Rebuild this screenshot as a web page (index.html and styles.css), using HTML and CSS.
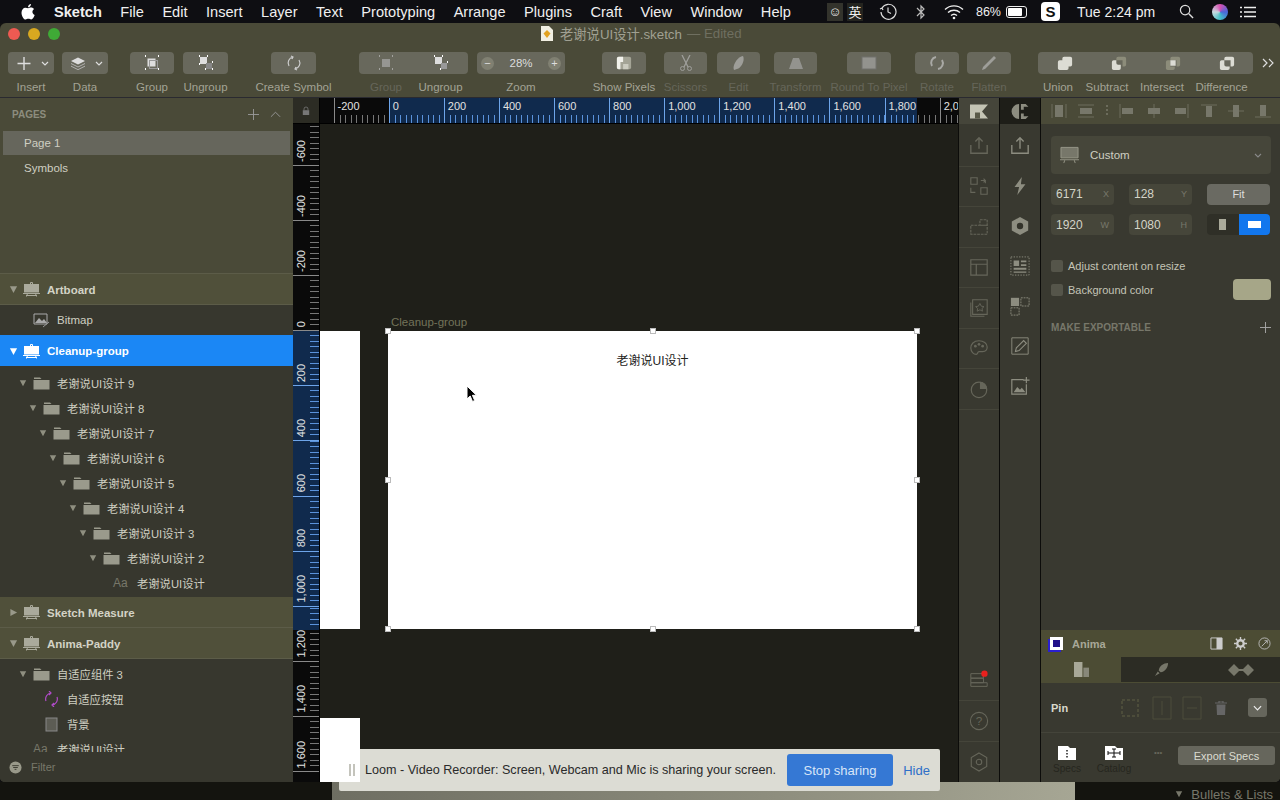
FILE: index.html
```html
<!DOCTYPE html>
<html lang="en">
<head>
    <meta charset="UTF-8">
    <title>老谢说UI设计.sketch</title>
    <link rel="stylesheet" href="styles.css">
</head>
<body>
    <svg class="defs" xmlns="http://www.w3.org/2000/svg">
        <symbol id="tri" viewBox="0 0 10 10"><path d="M1 1.500h8L5 9z" fill="currentColor"/></symbol>
        <symbol id="tri-r" viewBox="0 0 10 10"><path d="M1.500 1v8L9 5z" fill="currentColor"/></symbol>
        <symbol id="board" viewBox="0 0 17 15"><path d="M1 2h15v8.500H1z" fill="currentColor"/><path d="M7.500 2V0.500h2V2M0 11.500h17M3.500 14.500l1-3M13.500 14.500l-1-3M3 13.500h11" fill="none" stroke="currentColor"/></symbol>
        <symbol id="folder" viewBox="0 0 17 14"><path d="M1 1.500h6l1.500 1.500H1z" fill="currentColor"/><path d="M0.500 4h16v9.500H0.500z" fill="currentColor"/></symbol>
        <symbol id="up" viewBox="0 0 22 22"><path d="M2 10v9h18v-9M11 2v12M7 6l4-4 4 4" fill="none" stroke="currentColor" stroke-width="1.500"/></symbol>
    </svg>

    <header class="menubar">
        <svg class="apple" viewBox="0 0 14 16"><path d="M10 0c0 2-1.500 3.500-3 3.300C7 1.500 8.500.200 10 0zM7.100 4.200c.8 0 1.700-.7 3-.7 1.200 0 2.300.6 3 1.600-2.500 1.500-2 5 .6 6-.7 1.800-2 4.400-3.500 4.400-1.100 0-1.500-.7-2.800-.7s-1.800.7-2.800.7C2.600 15.500.5 11.800.5 8.700c0-3 1.900-5 3.800-5 1.200 0 2.100.5 2.800.5z" fill="#fff"/></svg>
        <nav class="menus">
            <b>Sketch</b><span>File</span><span>Edit</span><span>Insert</span><span>Layer</span><span>Text</span><span>Prototyping</span><span>Arrange</span><span>Plugins</span><span>Craft</span><span>View</span><span>Window</span><span>Help</span>
        </nav>
        <div class="status">
            <span class="chip">☺</span><span class="chip cjk">英</span>
            <svg class="st-clock" viewBox="0 0 18 18"><path d="M3 5a7.500 7.500 0 1 1-1 4M1 6l2-1 1 2M9 4.500V9l3 1.500" fill="none" stroke="#ddd" stroke-width="1.200"/></svg>
            <svg class="st-bt" viewBox="0 0 12 16"><path d="M2 4l7 7-3 3V2l3 3-7 7" fill="none" stroke="#bbb" stroke-width="1.200"/></svg>
            <svg class="st-wifi" viewBox="0 0 20 16"><path d="M1 5.500a13 13 0 0 1 18 0M4 8.500a9 9 0 0 1 12 0M7 11.500a4.500 4.500 0 0 1 6 0" fill="none" stroke="#eee" stroke-width="1.400"/><circle cx="10" cy="14" r="1.300" fill="#eee"/></svg>
            <span class="pct">86%</span>
            <span class="battery"><i></i></span>
            <span class="s-app">S</span>
            <span class="clock">Tue 2:24 pm</span>
            <svg class="st-search" viewBox="0 0 16 16"><circle cx="6.500" cy="6.500" r="5" fill="none" stroke="#ddd" stroke-width="1.300"/><path d="M10.500 10.500L15 15" stroke="#ddd" stroke-width="1.500"/></svg>
            <span class="siri"></span>
            <svg class="st-list" viewBox="0 0 16 12"><path d="M4 1.500h12M4 6h12M4 10.500h12M0 1.500h2M0 6h2M0 10.500h2" stroke="#eee" stroke-width="1.500"/></svg>
        </div>
    </header>

    <div class="window">
        <div class="titlebar">
            <span class="light red"></span><span class="light yellow"></span><span class="light green"></span>
            <div class="doc-title">
                <svg viewBox="0 0 12 15"><path d="M0 0h8l4 4v11H0z" fill="#f1efe2"/><path d="M6 4l3.500 3.500L6 12 2.500 7.500z" fill="#e2a21f"/></svg>
                <span>老谢说UI设计.sketch</span><em>— Edited</em>
            </div>
        </div>

        <div class="toolbar">
            <div class="tool w46"><div class="btn split"><svg viewBox="0 0 12 12"><path d="M6 0v12M0 6h12" stroke="#ddd" stroke-width="1.300"/></svg><svg class="chev" viewBox="0 0 8 5"><path d="M1 1l3 3 3-3" fill="none" stroke="#ddd" stroke-width="1.200"/></svg></div><label>Insert</label></div>
            <div class="tool w46 ml8"><div class="btn split"><svg viewBox="0 0 16 14"><path d="M8 0l8 4-8 4-8-4z" fill="#ddd"/><path d="M0 7l8 4 8-4M0 10l8 4 8-4" fill="none" stroke="#bbb"/></svg><svg class="chev" viewBox="0 0 8 5"><path d="M1 1l3 3 3-3" fill="none" stroke="#ddd" stroke-width="1.200"/></svg></div><label>Data</label></div>
            <div class="tool w44 ml22"><div class="btn"><svg viewBox="0 0 16 16"><path d="M1 1h1M14 1h1M1 14h1M14 14h1" stroke="#fff" stroke-width="2"/><rect x="3.500" y="3.500" width="8" height="8" fill="#ddd"/><rect x="5.500" y="5.500" width="8" height="8" fill="none" stroke="#999"/></svg></div><label>Group</label></div>
            <div class="tool w45 ml9"><div class="btn"><svg viewBox="0 0 16 16"><rect x="2" y="2" width="7" height="7" fill="#ddd"/><rect x="8" y="8" width="6" height="6" fill="#888"/><path d="M1 1h1M9 1h1M1 9h1M14 7h1M7 14h1M14 14h1" stroke="#fff" stroke-width="2"/></svg></div><label>Ungroup</label></div>
            <div class="tool w45 ml43"><div class="btn"><svg viewBox="0 0 16 16"><path d="M3 11a6 6 0 0 1 4-9M13 5a6 6 0 0 1-4 9M5 1l2 1-1 2M11 15l-2-1 1-2" fill="none" stroke="#ccc" stroke-width="1.200"/></svg></div><label>Create Symbol</label></div>

            <div class="combo ml43">
                <div class="tool w54"><div class="btn flat dim"><svg viewBox="0 0 16 16"><path d="M1 1h1M14 1h1M1 14h1M14 14h1" stroke="#bbb" stroke-width="2"/><rect x="4" y="4" width="8" height="8" fill="#aaa"/></svg></div><label class="off">Group</label></div>
                <div class="tool w55"><div class="btn flat"><svg viewBox="0 0 16 16"><rect x="2" y="2" width="7" height="7" fill="#ddd"/><rect x="8" y="8" width="6" height="6" fill="#999"/><path d="M1 1h1M9 1h1M14 7h1M7 14h1" stroke="#fff" stroke-width="2"/></svg></div><label>Ungroup</label></div>
            </div>
            <div class="tool w88 ml9"><div class="btn zoom"><span class="round">−</span><span>28%</span><span class="round">+</span></div><label>Zoom</label></div>

            <div class="tool w44 ml37"><div class="btn"><svg viewBox="0 0 18 16"><rect x="1" y="1" width="16" height="14" rx="2" fill="#a4a496"/><path d="M1 3a2 2 0 0 1 2-2h5v6H5v8H3a2 2 0 0 1-2-2z" fill="#f2f2ec"/><path d="M8 9h6v6H8z" fill="#ccccc0"/></svg></div><label>Show Pixels</label></div>
            <div class="tool w43 ml18 off-tool"><div class="btn"><svg viewBox="0 0 14 16"><path d="M3 0l6 12M11 0L5 12" stroke="#bbb" stroke-width="1.300"/><circle cx="3.500" cy="13.500" r="2" fill="none" stroke="#bbb"/><circle cx="10.500" cy="13.500" r="2" fill="none" stroke="#bbb"/></svg></div><label>Scissors</label></div>
            <div class="tool w43 ml10 off-tool"><div class="btn"><svg viewBox="0 0 14 16"><path d="M11 1c2 4-1 11-6 13l-3 1c-2-4 3-13 9-14z" fill="#bbb"/></svg></div><label>Edit</label></div>
            <div class="tool w43 ml14 off-tool"><div class="btn"><svg viewBox="0 0 16 14"><path d="M5 2h6l4 11H1z" fill="#aaa"/></svg></div><label>Transform</label></div>
            <div class="tool w44 ml30 off-tool"><div class="btn"><svg viewBox="0 0 16 14"><rect x="1" y="1" width="14" height="12" fill="#aaa" stroke="#777"/></svg></div><label>Round To Pixel</label></div>
            <div class="tool w44 ml24 off-tool"><div class="btn"><svg viewBox="0 0 16 16"><path d="M3 11a6 6 0 0 1 4-9M13 5a6 6 0 0 1-4 9" fill="none" stroke="#ccc" stroke-width="2"/></svg></div><label>Rotate</label></div>
            <div class="tool w44 ml8 off-tool"><div class="btn"><svg viewBox="0 0 16 16"><path d="M13 1l2 2L4 14l-3 1 1-3z" fill="#bbb"/></svg></div><label>Flatten</label></div>

            <div class="combo ml27">
                <div class="tool w54"><div class="btn flat"><svg viewBox="0 0 18 18"><path d="M8 2h7a2 2 0 0 1 2 2v7a2 2 0 0 1-2 2h-2v2a2 2 0 0 1-2 2H3a2 2 0 0 1-2-2V8a2 2 0 0 1 2-2h3V4a2 2 0 0 1 2-2z" fill="#dcdcd4"/></svg></div><label class="lb-union">Union</label></div>
                <div class="tool w54"><div class="btn flat"><svg viewBox="0 0 18 18"><path d="M8 2h7a2 2 0 0 1 2 2v7a2 2 0 0 1-2 2h-2V6H6V4a2 2 0 0 1 2-2z" fill="#8c8c7a"/><path d="M3 6h3v3a2 2 0 0 0 2 2h3v4a2 2 0 0 1-2 2H3a2 2 0 0 1-2-2V8a2 2 0 0 1 2-2z" fill="#dcdcd4"/></svg></div><label class="lb-subtract">Subtract</label></div>
                <div class="tool w54"><div class="btn flat"><svg viewBox="0 0 18 18"><path d="M8 2h7a2 2 0 0 1 2 2v7a2 2 0 0 1-2 2h-2V6H6V4a2 2 0 0 1 2-2zM3 6h3v7h5v2a2 2 0 0 1-2 2H3a2 2 0 0 1-2-2V8a2 2 0 0 1 2-2z" fill="#8c8c7a"/><path d="M6 6h6v6H6z" fill="#dcdcd4"/></svg></div><label class="lb-intersect">Intersect</label></div>
                <div class="tool w53"><div class="btn flat"><svg viewBox="0 0 18 18"><path d="M8 2h7a2 2 0 0 1 2 2v7a2 2 0 0 1-2 2h-2V6H6V4a2 2 0 0 1 2-2zM3 6h3v5a2 2 0 0 0 2 2h4v2a2 2 0 0 1-2 2H3a2 2 0 0 1-2-2V8a2 2 0 0 1 2-2z" fill="#dcdcd4"/></svg></div><label class="lb-difference">Difference</label></div>
            </div>
            <svg class="more" viewBox="0 0 12 10"><path d="M1 1l4 4-4 4M7 1l4 4-4 4" fill="none" stroke="#ddd" stroke-width="1.200"/></svg>
        </div>

        <div class="app-body">
            <aside class="layers">
                <div class="pages">
                    <div class="pages-head"><span>PAGES</span><span class="head-icons"><svg viewBox="0 0 12 12"><path d="M6 0v12M0 6h12" stroke="#999" stroke-width="1"/></svg><svg viewBox="0 0 12 7"><path d="M1 6l5-5 5 5" fill="none" stroke="#999" stroke-width="1"/></svg></span></div>
                    <div class="page selected">Page 1</div>
                    <div class="page">Symbols</div>
                </div>

                <div class="group-row"><svg class="arrow"><use href="#tri"/></svg><svg class="ico"><use href="#board"/></svg><b>Artboard</b></div>
                <div class="tree bitmap-wrap">
                    <div class="row tall"><svg class="ico" viewBox="0 0 17 16"><path d="M1 2h13v10H1z" fill="none" stroke="#aaa"/><path d="M2 11l4-5 3 3 2-2 3 4z" fill="#aaa"/><path d="M10 15l6-5" stroke="#999"/></svg><span>Bitmap</span></div>
                </div>
                <div class="group-row active"><svg class="arrow"><use href="#tri"/></svg><svg class="ico"><use href="#board"/></svg><b>Cleanup-group</b></div>

                <div class="tree">
                    <div class="row"><svg class="arrow"><use href="#tri"/></svg><svg class="ico"><use href="#folder"/></svg><span>老谢说UI设计 9</span></div>
                    <div class="kids">
                        <div class="row"><svg class="arrow"><use href="#tri"/></svg><svg class="ico"><use href="#folder"/></svg><span>老谢说UI设计 8</span></div>
                        <div class="kids">
                            <div class="row"><svg class="arrow"><use href="#tri"/></svg><svg class="ico"><use href="#folder"/></svg><span>老谢说UI设计 7</span></div>
                            <div class="kids">
                                <div class="row"><svg class="arrow"><use href="#tri"/></svg><svg class="ico"><use href="#folder"/></svg><span>老谢说UI设计 6</span></div>
                                <div class="kids">
                                    <div class="row"><svg class="arrow"><use href="#tri"/></svg><svg class="ico"><use href="#folder"/></svg><span>老谢说UI设计 5</span></div>
                                    <div class="kids">
                                        <div class="row"><svg class="arrow"><use href="#tri"/></svg><svg class="ico"><use href="#folder"/></svg><span>老谢说UI设计 4</span></div>
                                        <div class="kids">
                                            <div class="row"><svg class="arrow"><use href="#tri"/></svg><svg class="ico"><use href="#folder"/></svg><span>老谢说UI设计 3</span></div>
                                            <div class="kids">
                                                <div class="row"><svg class="arrow"><use href="#tri"/></svg><svg class="ico"><use href="#folder"/></svg><span>老谢说UI设计 2</span></div>
                                                <div class="kids">
                                                    <div class="row"><i class="aa">Aa</i><span>老谢说UI设计</span></div>
                                                </div>
                                            </div>
                                        </div>
                                    </div>
                                </div>
                            </div>
                        </div>
                    </div>
                </div>

                <div class="group-row"><svg class="arrow"><use href="#tri-r"/></svg><svg class="ico"><use href="#board"/></svg><b>Sketch Measure</b></div>
                <div class="group-row"><svg class="arrow"><use href="#tri"/></svg><svg class="ico"><use href="#board"/></svg><b>Anima-Paddy</b></div>

                <div class="tree clipped">
                    <div class="row"><svg class="arrow"><use href="#tri"/></svg><svg class="ico"><use href="#folder"/></svg><span>自适应组件 3</span></div>
                    <div class="kids">
                        <div class="row"><svg class="ico" viewBox="0 0 17 16"><path d="M3 10a6 6 0 0 1 5-8M14 6a6 6 0 0 1-5 8M6 0l2 2-2 2M11 16l-2-2 2-2" fill="none" stroke="#b04bc8" stroke-width="1.200"/></svg><span>自适应按钮</span></div>
                        <div class="row"><svg class="ico" viewBox="0 0 17 16"><rect x="3" y="2" width="11" height="13" fill="#5c5c54" stroke="#888"/></svg><span>背景</span></div>
                    </div>
                    <div class="row"><i class="aa">Aa</i><span>老谢说UI设计</span></div>
                </div>

                <div class="filter"><svg viewBox="0 0 14 14"><circle cx="7" cy="7" r="6.500" fill="#99998a"/><path d="M3.500 5h7M4.500 7h5M6 9h2" stroke="#3a3a30"/></svg><span>Filter</span></div>
            </aside>

            <main class="work">
                <div class="corner"><svg viewBox="0 0 10 12"><path d="M2.500 5V3.500a2.500 2.500 0 0 1 5 0V5" fill="none" stroke="#777"/><rect x="1" y="5" width="8" height="6" fill="#777"/></svg></div>
                <div class="ruler-h">
                    <div class="cell-h">-200</div>
                    <div class="cell-h on">0</div>
                    <div class="cell-h on">200</div>
                    <div class="cell-h on">400</div>
                    <div class="cell-h on">600</div>
                    <div class="cell-h on">800</div>
                    <div class="cell-h on">1,000</div>
                    <div class="cell-h on">1,200</div>
                    <div class="cell-h on">1,400</div>
                    <div class="cell-h on">1,600</div>
                    <div class="cell-h part">1,800</div>
                    <div class="cell-h tail">2,0</div>
                </div>
                <div class="ruler-v">
                    <div class="cell-v first"><span>-600</span></div>
                    <div class="cell-v"><span>-400</span></div>
                    <div class="cell-v"><span>-200</span></div>
                    <div class="cell-v"><span>0</span></div>
                    <div class="cell-v on"><span>200</span></div>
                    <div class="cell-v on"><span>400</span></div>
                    <div class="cell-v on"><span>600</span></div>
                    <div class="cell-v on"><span>800</span></div>
                    <div class="cell-v on"><span>1,000</span></div>
                    <div class="cell-v part"><span>1,200</span></div>
                    <div class="cell-v"><span>1,400</span></div>
                    <div class="cell-v"><span>1,600</span></div>
                </div>
                <div class="canvas">
                    <div class="slab slab-a"></div>
                    <div class="slab slab-b"></div>
                    <span class="board-name">Cleanup-group</span>
                    <div class="artboard">
                        <span class="board-text">老谢说UI设计</span>
                        <i class="h tl"></i><i class="h tc"></i><i class="h tr"></i>
                        <i class="h ml"></i><i class="h mr"></i>
                        <i class="h bl"></i><i class="h bc"></i><i class="h br"></i>
                    </div>
                    <svg class="cursor" viewBox="0 0 12 18"><path d="M1 1v13l3.200-3 2.300 5.500 2.200-1-2.300-5.200H10.500z" fill="#000" stroke="#fff" stroke-width="1"/></svg>
                </div>
            </main>

            <div class="strip strip-a">
                <div class="strip-top"><svg viewBox="0 0 18 14"><path d="M0 0h18l-6 7 6 7H0z" fill="#c4c4b4"/><path d="M5 8h5v6H5z" fill="#5a5a48"/></svg></div>
                <div class="cell"><svg><use href="#up"/></svg></div>
                <div class="cell"><svg viewBox="0 0 22 22"><path d="M2 2h7v7H2zM13 13h7v7h-7zM13 5h5v3M2 13v5h5M16 3l2 2-2 2" fill="none" stroke="currentColor" stroke-width="1.200"/></svg></div>
                <div class="cell"><svg viewBox="0 0 22 22"><path d="M2 9h18v10H2zM12 3h8v6h-8z" fill="none" stroke="currentColor" stroke-width="1.200" stroke-dasharray="3 1"/></svg></div>
                <div class="cell"><svg viewBox="0 0 22 22"><path d="M2 3h18v17H2zM2 8h18M8 8v12" fill="none" stroke="currentColor" stroke-width="1.300"/></svg></div>
                <div class="cell"><svg viewBox="0 0 22 22"><path d="M4 2h16v16H4zM2 5v15h15" fill="none" stroke="currentColor" stroke-width="1.200"/><path d="M12 6l1.500 3 3 .5-2.200 2 .5 3-2.800-1.500L9 14.500l.5-3-2.200-2 3-.5z" fill="none" stroke="currentColor"/></svg></div>
                <div class="cell"><svg viewBox="0 0 22 22"><path d="M11 3C5 3 2 7 2 11c0 4 3 7 6 7 2 0 1-3 3-3h4c3 0 5-2 5-5 0-4-4-7-9-7z" fill="none" stroke="currentColor" stroke-width="1.300"/><circle cx="7" cy="9" r="1.500" fill="currentColor"/><circle cx="11" cy="7" r="1.500" fill="currentColor"/><circle cx="15" cy="9" r="1.500" fill="currentColor"/></svg></div>
                <div class="cell"><svg viewBox="0 0 22 22"><circle cx="11" cy="12" r="8.500" fill="none" stroke="currentColor" stroke-width="1.300"/><path d="M12 3v8h8a8 8 0 0 0-8-8z" fill="currentColor"/></svg></div>
                <div class="strip-end">
                    <div class="cell"><svg class="overflow" viewBox="0 0 22 22"><path d="M2 4h14v5H2zM2 9h14v5H2zM2 14h18v4H2z" fill="none" stroke="currentColor" stroke-width="1.100"/><circle cx="17" cy="4" r="3.500" fill="#e8201e"/></svg></div>
                    <div class="cell"><svg viewBox="0 0 22 22"><circle cx="11" cy="11" r="9.500" fill="none" stroke="currentColor" stroke-width="1.200"/><text x="11" y="15.500" class="qmark">?</text></svg></div>
                    <div class="cell"><svg viewBox="0 0 22 22"><path d="M11 1l8.500 5v10L11 21l-8.500-5V6z" fill="none" stroke="currentColor" stroke-width="1.200"/><circle cx="11" cy="11" r="3" fill="none" stroke="currentColor" stroke-width="1.200"/></svg></div>
                </div>
            </div>

            <div class="strip strip-b">
                <div class="strip-top dark"><svg viewBox="0 0 18 16"><path d="M8 0v16A8 8 0 0 1 8 0zM10 0h5l3 3h-5v3h-3zM10 10h3v3h5l-3 3h-5z" fill="#8d8d80"/></svg></div>
                <div class="cell"><svg><use href="#up"/></svg></div>
                <div class="cell"><svg viewBox="0 0 22 22"><path d="M13 1L5 12h5l-2 9 9-12h-5z" fill="currentColor"/></svg></div>
                <div class="cell"><svg viewBox="0 0 22 22"><path d="M11 1l9 5v10l-9 5-9-5V6z" fill="currentColor"/><circle cx="11" cy="11" r="3.500" fill="#33332a"/></svg></div>
                <div class="cell"><svg viewBox="0 0 22 22"><path d="M1 1h20v20H1z" fill="none" stroke="currentColor" stroke-dasharray="1.500 1.500"/><path d="M4 5h6v6H4zM12 5h6v2h-6zM12 9h6v2h-6zM4 13h14v2H4zM4 17h14v1.500H4z" fill="currentColor"/></svg></div>
                <div class="cell"><svg viewBox="0 0 22 22"><rect x="1" y="2" width="9" height="9" fill="currentColor"/><path d="M12 2h9v9h-9zM1 13h9v8H1z" fill="none" stroke="currentColor" stroke-dasharray="2 1"/></svg></div>
                <div class="cell"><svg viewBox="0 0 22 22"><path d="M2 2h18v18H2z" fill="none" stroke="currentColor"/><path d="M6 17l1-4 8-8 3 3-8 8z" fill="none" stroke="currentColor" stroke-width="1.200"/></svg></div>
                <div class="cell"><svg viewBox="0 0 22 22"><path d="M15 4H2v16h16V9" fill="none" stroke="currentColor" stroke-width="1.300"/><path d="M4 18l4-6 3 3 2-2 4 5z" fill="currentColor"/><path d="M18 1v7M14.500 4.500h7" stroke="currentColor" stroke-width="1.300"/></svg></div>
            </div>

            <aside class="inspector">
                <div class="align-bar">
                    <svg viewBox="0 0 16 14"><path d="M1 0v14M15 0v14" stroke="#6c6c5c"/><rect x="4" y="1" width="8" height="12" fill="#77776a"/></svg>
                    <svg viewBox="0 0 16 14"><path d="M0 1h16M0 13h16" stroke="#6c6c5c"/><rect x="2" y="4" width="12" height="6" fill="#77776a"/></svg>
                    <svg class="narrow" viewBox="0 0 2 12"><path d="M1 0v12" stroke="#6c6c5c" stroke-dasharray="2 2" stroke-width="2"/></svg>
                    <svg viewBox="0 0 16 14"><path d="M1 0v14" stroke="#6c6c5c"/><rect x="3" y="4" width="11" height="6" fill="#77776a"/></svg>
                    <svg viewBox="0 0 16 14"><path d="M8 0v14" stroke="#6c6c5c"/><rect x="2" y="4" width="12" height="6" fill="#77776a"/></svg>
                    <svg viewBox="0 0 16 14"><path d="M15 0v14" stroke="#6c6c5c"/><rect x="2" y="4" width="11" height="6" fill="#77776a"/></svg>
                    <svg viewBox="0 0 16 14"><path d="M0 1h16" stroke="#6c6c5c"/><rect x="5" y="2" width="6" height="11" fill="#77776a"/></svg>
                    <svg viewBox="0 0 16 14"><path d="M0 7h16" stroke="#6c6c5c"/><rect x="5" y="1" width="6" height="12" fill="#77776a"/></svg>
                    <svg viewBox="0 0 16 14"><path d="M0 13h16" stroke="#6c6c5c"/><rect x="5" y="1" width="6" height="11" fill="#77776a"/></svg>
                </div>
                <div class="props">
                    <div class="preset">
                        <svg viewBox="0 0 20 18"><path d="M1 1h18v11H1z" fill="#77776a" stroke="#99998a"/><path d="M0 14h20M4 17.500l1-3M16 17.500l-1-3" stroke="#99998a"/></svg>
                        <span>Custom</span>
                        <svg class="chev-s" viewBox="0 0 8 5"><path d="M1 1l3 3 3-3" fill="none" stroke="#888" stroke-width="1.100"/></svg>
                    </div>
                    <div class="field-row">
                        <div class="field"><span>6171</span><small>X</small></div>
                        <div class="field"><span>128</span><small>Y</small></div>
                        <div class="fit">Fit</div>
                    </div>
                    <div class="field-row">
                        <div class="field"><span>1920</span><small>W</small></div>
                        <div class="field"><span>1080</span><small>H</small></div>
                        <div class="orient"><span><i class="tall-box"></i></span><span class="picked"><i class="wide-box"></i></span></div>
                    </div>
                    <div class="check first-check"><i></i><span>Adjust content on resize</span></div>
                    <div class="check"><i></i><span>Background color</span><b class="swatch"></b></div>
                    <div class="export"><span>MAKE EXPORTABLE</span><svg viewBox="0 0 12 12"><path d="M6 0v12M0 6h12" stroke="#aaa"/></svg></div>
                </div>

                <div class="anima">
                    <div class="anima-head">
                        <span class="anima-logo"></span><b>Anima</b>
                        <span class="anima-icons">
                            <svg viewBox="0 0 14 14"><path d="M1 1h12v12H1z" fill="none" stroke="#ccc"/><path d="M7 1h6v12H7z" fill="#ccc"/></svg>
                            <svg viewBox="0 0 14 14"><circle cx="7" cy="7" r="3.500" fill="none" stroke="#ccc" stroke-width="2.500"/><path d="M7 0v3M7 11v3M0 7h3M11 7h3M2 2l2 2M10 10l2 2M2 12l2-2M10 4l2-2" stroke="#ccc" stroke-width="1.500"/></svg>
                            <svg viewBox="0 0 14 14"><circle cx="7" cy="7" r="6" fill="none" stroke="#bbb"/><path d="M4 10l6-6M7 4h3v3" fill="none" stroke="#bbb"/></svg>
                        </span>
                    </div>
                    <div class="anima-tabs">
                        <span class="tab current"><svg viewBox="0 0 16 16"><path d="M0 0h9v16H0z" fill="#a8a898"/><path d="M10 6h6v10h-6z" fill="#88887a"/></svg></span>
                        <span class="tab"><svg viewBox="0 0 16 16"><path d="M15 1c-5 0-9 3-10 8l2 2c5-1 8-5 8-10zM1 15l3-5 2 2z" fill="#77776a"/></svg></span>
                        <span class="tab"><svg class="wide" viewBox="0 0 26 12"><path d="M6 0l6 6-6 6-6-6zM20 0l6 6-6 6-6-6z" fill="#77776a"/><path d="M8 6h10" stroke="#77776a" stroke-width="2"/></svg></span>
                    </div>
                    <div class="pin">
                        <b>Pin</b>
                        <div class="pin-icons">
                            <svg class="pin-wide" viewBox="0 0 24 24"><path d="M4 4h16v16H4z" fill="none" stroke="#4c4c3a" stroke-dasharray="3 2" stroke-width="2"/></svg>
                            <svg viewBox="0 0 20 24"><path d="M1 1h18v22H1zM10 5v14" fill="none" stroke="#4c4c3a"/></svg>
                            <svg viewBox="0 0 20 24"><path d="M1 1h18v22H1zM5 12h10" fill="none" stroke="#4c4c3a"/></svg>
                        </div>
                        <svg class="trash" viewBox="0 0 12 14"><path d="M0 2h12M4 2V0h4v2" stroke="#666" stroke-width="1.200" fill="none"/><path d="M1.500 3.500h9L10 14H2z" fill="#666"/></svg>
                        <span class="pin-drop"><svg viewBox="0 0 10 6"><path d="M1 1l4 4 4-4" fill="none" stroke="#eee" stroke-width="1.300"/></svg></span>
                    </div>
                    <div class="specs">
                        <div class="spec"><svg viewBox="0 0 18 14"><path d="M0 0h10l2 2h6v12H0z" fill="#fff"/><path d="M9 4v1.500M9 7v1.500M9 10v1.500" stroke="#111" stroke-width="1.400"/></svg><small>Specs</small></div>
                        <div class="spec"><svg viewBox="0 0 18 14"><path d="M0 0h10l2 2h6v12H0z" fill="#fff"/><path d="M9 3v8M3 7h12M7 3h4M7 11h4M3 5v4M15 5v4" stroke="#111"/></svg><small>Catalog</small></div>
                        <span class="dots">•••</span>
                        <div class="export-btn">Export Specs</div>
                    </div>
                </div>
            </aside>
        </div>
    </div>

    <footer class="behind">
        <div class="behind-light"></div>
        <div class="behind-right"><svg viewBox="0 0 10 10"><use href="#tri"/></svg><span>Bullets &amp; Lists</span></div>
    </footer>

    <div class="loom">
        <span class="pause"></span>
        <span class="loom-text">Loom - Video Recorder: Screen, Webcam and Mic is sharing your screen.</span>
        <span class="stop">Stop sharing</span>
        <span class="hide">Hide</span>
    </div>
</body>
</html>
```

FILE: styles.css
```css
:root {
    --olive: #4a4a38;
    --olive-row: #50503a;
    --tree: #37372e;
    --panel: #393930;
    --canvas: #1f1f19;
    --text: #cfcfc2;
    --muted: #8c8c7e;
    --blue: #1b87f5;
}

* {
    box-sizing: border-box;
}

html, body {
    margin: 0;
    height: 800px;
    overflow: hidden;
}

body {
    position: relative;
    background: #111;
    font-family: "Liberation Sans", "Noto Sans CJK SC", sans-serif;
    font-size: 11px;
    color: var(--text);
}

.defs {
    display: none;
}

/* mac menu bar */
.menubar {
    height: 23px;
    background: #0e0e12;
    display: flex;
    align-items: center;
    color: #f0f0f0;
    font-size: 14.600px;
}

.apple {
    width: 14px;
    height: 16px;
    margin: 0 19px 0 21px;
}

.menus {
    display: flex;
    gap: 18.500px;
    align-items: center;
}

.status {
    margin-left: auto;
    display: flex;
    align-items: center;
    height: 23px;
    padding-right: 24px;
    font-size: 14px;
}

.chip {
    width: 16px;
    height: 18px;
    margin-right: 4px;
    background: #33332c;
    font-size: 13px;
    display: flex;
    align-items: center;
    justify-content: center;
}

.chip.cjk {
    background: #24241f;
    margin-right: 16px;
    font-size: 13px;
}

.st-clock { width: 18px; height: 18px; margin-right: 18px; }
.st-bt { width: 12px; height: 16px; margin-right: 17px; }
.st-wifi { width: 20px; height: 16px; margin-right: 12px; }

.pct {
    font-size: 12.500px;
    margin-right: 5px;
}

.battery {
    width: 21px;
    height: 12px;
    border: 1px solid #eee;
    border-radius: 3px;
    padding: 1px;
    margin-right: 2px;
    display: flex;
}

.battery i {
    width: 85%;
    background: #fff;
    border-radius: 1px;
}

.s-app {
    width: 19px;
    height: 19px;
    margin-left: 12px;
    background: #fff;
    color: #111;
    border-radius: 4px;
    font-weight: bold;
    font-size: 15px;
    display: flex;
    align-items: center;
    justify-content: center;
}

.clock {
    margin-left: 17px;
    font-size: 14px;
    width: 80px;
    white-space: nowrap;
}

.st-search { width: 15px; height: 15px; margin-left: 22px; }

.siri {
    width: 16px;
    height: 16px;
    margin-left: 18px;
    border-radius: 50%;
    background: conic-gradient(#d84fb0, #4a66d8, #43c0c8, #c8dbe0, #d84fb0);
}

.st-list { width: 16px; height: 12px; margin-left: 12px; }

/* sketch window */
.window {
    height: 759px;
    border-radius: 6px 6px 5px 5px;
    overflow: hidden;
    background: var(--olive);
    display: flex;
    flex-direction: column;
}

.titlebar {
    height: 21px;
    position: relative;
    display: flex;
    align-items: center;
    gap: 8px;
    padding: 0 0 0 8px;
}

.light {
    width: 12px;
    height: 12px;
    border-radius: 50%;
}

.red { background: #ee5a52; }
.yellow { background: #d8a820; }
.green { background: #3faa36; }

.doc-title {
    margin-left: 473px;
    display: flex;
    align-items: center;
    font-size: 13.300px;
    color: #a0a092;
}

.doc-title svg {
    width: 12px;
    height: 15px;
    margin-right: 7px;
}

.doc-title em {
    font-style: normal;
    color: #6f6f60;
    margin-left: 5px;
}

.toolbar {
    height: 54px;
    padding: 8px 0 0 8px;
    display: flex;
    align-items: flex-start;
    border-bottom: 1px solid #2a2a30;
}

.tool {
    display: flex;
    flex-direction: column;
    align-items: center;
    flex: none;
}

.tool label {
    margin-top: 7px;
    white-space: nowrap;
    font-size: 11.500px;
    color: #a3a395;
}

.tool label.off,
.off-tool label {
    color: #66665a;
}

/* the labels of the boolean group don't sit under their icons */
.tool .lb-union { margin-right: 14px; }
.tool .lb-subtract { margin-right: 24px; }
.tool .lb-intersect { margin-right: 22px; }
.tool .lb-difference { margin-right: 10px; }

.w43 { width: 43px; }
.w44 { width: 44px; }
.w45 { width: 45px; }
.w46 { width: 46px; }
.w53 { width: 53px; }
.w54 { width: 54px; }
.w55 { width: 55px; }
.w88 { width: 88px; }
.ml8 { margin-left: 8px; }
.ml9 { margin-left: 9px; }
.ml10 { margin-left: 10px; }
.ml14 { margin-left: 14px; }
.ml18 { margin-left: 18px; }
.ml22 { margin-left: 22px; }
.ml24 { margin-left: 24px; }
.ml27 { margin-left: 27px; }
.ml30 { margin-left: 30px; }
.ml37 { margin-left: 37px; }
.ml43 { margin-left: 43px; }

.btn {
    width: 100%;
    height: 22px;
    background: #68685c;
    border-radius: 4px;
    display: flex;
    align-items: center;
    justify-content: center;
}

.btn svg {
    width: 16px;
    height: 16px;
}

.off-tool .btn svg {
    opacity: 0.65;
}

.btn.split {
    justify-content: space-between;
    padding: 0 5px 0 9px;
}

.btn.split svg.chev {
    width: 8px;
    height: 5px;
}

.btn.split svg:first-child {
    width: 14px;
    height: 13px;
}

.combo {
    display: flex;
    flex: none;
}

.combo .btn {
    border-radius: 0;
}

.combo .tool:first-child .btn {
    border-radius: 4px 0 0 4px;
}

.combo .tool:last-child .btn {
    border-radius: 0 4px 4px 0;
}

.btn.dim svg {
    opacity: 0.7;
}

.btn.zoom {
    justify-content: space-between;
    padding: 0 4px;
    font-size: 11.500px;
    color: #ddd;
}

.round {
    width: 13px;
    height: 13px;
    border-radius: 50%;
    background: #808072;
    color: #ddd;
    font-size: 11px;
    line-height: 13px;
    text-align: center;
}

.more {
    width: 12px;
    height: 10px;
    margin: 6px 0 0 9px;
    flex: none;
}

.app-body {
    flex: 1;
    display: flex;
    min-height: 0;
}

/* layer list */
.layers {
    width: 293px;
    flex: none;
    display: flex;
    flex-direction: column;
    position: relative;
    overflow: hidden;
    background: var(--tree);
}

.pages {
    height: 176px;
    flex: none;
    background: var(--olive);
    padding: 0 3px;
    border-bottom: 1px solid #5c5c48;
}

.pages-head {
    height: 33px;
    display: flex;
    align-items: center;
    justify-content: space-between;
    padding: 0 9px;
    color: #8d8d7e;
    font-size: 10px;
    font-weight: bold;
}

.head-icons {
    display: flex;
    align-items: center;
    gap: 11px;
}

.head-icons svg {
    width: 11px;
    height: 11px;
}

.page {
    height: 24px;
    padding-left: 21px;
    display: flex;
    align-items: center;
    color: #cfcfc2;
    font-size: 11.500px;
    margin-bottom: 1px;
}

.page.selected {
    background: #66665c;
}

.group-row {
    height: 31px;
    flex: none;
    display: flex;
    align-items: center;
    padding: 1px 0 0 9px;
    background: var(--olive-row);
    border-bottom: 1px solid #5c5c48;
    color: #d3d3c6;
}

.group-row b {
    font-size: 11.500px;
}

.group-row .arrow {
    width: 9px;
    height: 9px;
    color: #99998a;
    margin-right: 5px;
}

.group-row .ico {
    width: 17px;
    height: 15px;
    margin-right: 7px;
    color: #aaaa9c;
}

.group-row.active {
    background: var(--blue);
    border-bottom: 0;
    color: #fff;
}

.group-row.active .arrow,
.group-row.active .ico {
    color: #fff;
}

.tree {
    padding: 4px 0 2px 0;
    flex: none;
    background: var(--tree);
}

.bitmap-wrap {
    padding: 0;
}

.row {
    height: 25px;
    display: flex;
    align-items: center;
    padding-left: 19px;
    font-size: 11.300px;
    white-space: nowrap;
}

.row.tall {
    height: 30px;
    padding-left: 33px;
    font-size: 11.500px;
}

.tree > .kids > .row > svg.ico:first-child {
    margin-left: 14px;
    width: 17px;
    height: 16px;
}

.row .arrow {
    width: 8px;
    height: 8px;
    margin-right: 6px;
    color: #8f8f80;
    flex: none;
}

.row .ico {
    width: 17px;
    height: 14px;
    margin-right: 7px;
    color: #9a9a8c;
    flex: none;
}

.row.tall .ico {
    height: 16px;
}

.aa {
    font-style: normal;
    color: #77776a;
    font-size: 12px;
    width: 17px;
    margin: 0 7px 0 14px;
    flex: none;
}

.kids {
    padding-left: 10px;
}

.clipped {
    flex: 1;
    min-height: 0;
    overflow: hidden;
    padding-top: 2px;
}

.filter {
    position: absolute;
    left: 0;
    right: 0;
    bottom: 0;
    height: 30px;
    background: var(--tree);
    display: flex;
    align-items: center;
    padding-left: 9px;
    color: #77776a;
    gap: 9px;
}

.filter svg {
    width: 13px;
    height: 13px;
}

/* canvas + rulers */
.work {
    width: 665px;
    flex: none;
    display: grid;
    grid-template-columns: 27px 638px;
    grid-template-rows: 26px 658px;
    background: var(--canvas);
}

.corner {
    background: #2c2c24;
    border-right: 1px solid #000;
    border-bottom: 1px solid #000;
    display: flex;
    align-items: center;
    justify-content: center;
}

.corner svg {
    width: 8px;
    height: 10px;
}

.ruler-h {
    background: #0a0a0a;
    display: flex;
    padding-left: 13.600px;
    overflow: hidden;
    border-bottom: 1px solid #000;
}

.cell-h {
    width: 55.100px;
    flex: none;
    padding: 2px 0 0 3px;
    border-left: 1px solid #8a8a8a;
    color: #e2e2e2;
    font-size: 11px;
    background: repeating-linear-gradient(90deg, transparent 0 4.510px, #777 4.510px 5.510px) 0 100% / 100% 8px no-repeat;
}

.cell-h.tail {
    width: 18px;
}

.cell-h.on {
    border-left-color: #6ea5ea;
    background:
        repeating-linear-gradient(90deg, transparent 0 4.510px, #5b93dc 4.510px 5.510px) 0 100% / 100% 8px no-repeat,
        #102a4d;
}

.cell-h.part {
    border-left-color: #6ea5ea;
    background:
        repeating-linear-gradient(90deg, transparent 0 4.510px, #5b93dc 4.510px 5.510px) 0 100% / 31px 8px no-repeat,
        linear-gradient(#102a4d, #102a4d) 0 0 / 31px 100% no-repeat,
        repeating-linear-gradient(90deg, transparent 0 4.510px, #777 4.510px 5.510px) 0 100% / 100% 8px no-repeat;
}

.ruler-v {
    background: #0a0a0a;
    display: flex;
    flex-direction: column;
    overflow: hidden;
    border-right: 1px solid #000;
}

.cell-v {
    height: 55.100px;
    flex: none;
    position: relative;
    border-bottom: 1px solid #8a8a8a;
    background: repeating-linear-gradient(0deg, transparent 0 4.510px, #777 4.510px 5.510px) 100% 0 / 9px 100% no-repeat;
}

.cell-v.first {
    height: 42px;
}

.cell-v span {
    position: absolute;
    right: 12px;
    bottom: 3px;
    writing-mode: vertical-rl;
    transform: rotate(180deg);
    font-size: 11px;
    color: #e2e2e2;
}

.cell-v.on {
    border-bottom-color: #6ea5ea;
    background:
        repeating-linear-gradient(0deg, transparent 0 4.510px, #5b93dc 4.510px 5.510px) 100% 0 / 9px 100% no-repeat,
        #102a4d;
}

.cell-v.part {
    background:
        repeating-linear-gradient(0deg, transparent 0 4.510px, #5b93dc 4.510px 5.510px) 100% 0 / 9px 23px no-repeat,
        linear-gradient(#102a4d, #102a4d) 0 0 / 100% 23px no-repeat,
        repeating-linear-gradient(0deg, transparent 0 4.510px, #777 4.510px 5.510px) 100% 0 / 9px 100% no-repeat;
}

.canvas {
    position: relative;
    overflow: hidden;
    background: var(--canvas);
}

.slab {
    position: absolute;
    left: 0;
    width: 40px;
    background: #fff;
}

.slab-a { top: 207px; height: 298px; }
.slab-b { top: 594px; height: 70px; }

.board-name {
    position: absolute;
    left: 71px;
    top: 192px;
    font-size: 11.500px;
    color: #73735a;
}

.artboard {
    position: absolute;
    left: 68px;
    top: 207px;
    width: 529px;
    height: 298px;
    background: #fff;
    display: flex;
    justify-content: center;
}

.board-text {
    margin-top: 20px;
    height: 16px;
    font-size: 12px;
    color: #23231a;
}

.h {
    position: absolute;
    width: 6px;
    height: 6px;
    background: #fff;
    border: 1px solid #bbb;
}

.tl { left: -3px; top: -3px; }
.tc { left: 262px; top: -3px; }
.tr { right: -3px; top: -3px; }
.ml { left: -3px; top: 146px; }
.mr { right: -3px; top: 146px; }
.bl { left: -3px; bottom: -3px; }
.bc { left: 262px; bottom: -3px; }
.br { right: -3px; bottom: -3px; }

.cursor {
    position: absolute;
    left: 146px;
    top: 261px;
    width: 12px;
    height: 18px;
}

/* plugin icon strips */
.strip {
    width: 41px;
    flex: none;
    background: var(--panel);
    border-left: 1px solid #0c0c0a;
    display: flex;
    flex-direction: column;
    color: #66665a;
}

.strip-b {
    color: #8d8d80;
}

.strip-top {
    height: 26px;
    margin-bottom: 2px;
    flex: none;
    background: #45453a;
    display: flex;
    align-items: center;
    justify-content: center;
}

.strip-top.dark {
    background: #1e1e18;
}

.strip-top svg {
    width: 18px;
    height: 15px;
}

.cell {
    height: 40.500px;
    flex: none;
    display: flex;
    align-items: center;
    justify-content: center;
    border-bottom: 1px solid #45453a;
}

.strip-b .cell {
    border-bottom: 0;
    height: 40px;
}

.cell svg {
    width: 20px;
    height: 20px;
}

.cell svg.overflow {
    overflow: visible;
}

.qmark {
    font-size: 13px;
    fill: #66665a;
    text-anchor: middle;
}

.strip-end {
    margin-top: auto;
}

.strip-end .cell:last-child {
    border-bottom: 0;
}

/* inspector */
.inspector {
    flex: 1;
    border-left: 1px solid #0c0c0a;
    background: var(--panel);
    display: flex;
    flex-direction: column;
}

.align-bar {
    height: 26px;
    flex: none;
    background: #4a4a38;
    display: flex;
    align-items: center;
    padding: 0 10px 0 10px;
    justify-content: space-between;
}

.align-bar svg {
    width: 16px;
    height: 14px;
}

.align-bar svg.narrow {
    width: 2px;
}

.props {
    padding: 12px 10px 0 10px;
}

.preset {
    height: 38px;
    background: #46463a;
    border-radius: 4px;
    display: flex;
    align-items: center;
    padding: 0 9px;
    font-size: 11.500px;
}

.preset svg {
    width: 19px;
    height: 18px;
    margin-right: 11px;
}

.preset svg.chev-s {
    width: 8px;
    height: 5px;
    margin: 0 0 0 auto;
}

.field-row {
    display: flex;
    gap: 15px;
    margin-top: 9.500px;
}

.field {
    width: 63px;
    height: 21px;
    background: #46463a;
    border-radius: 4px;
    display: flex;
    align-items: center;
    justify-content: space-between;
    padding: 0 5px;
    font-size: 12px;
    color: #d4d4c8;
}

.field small {
    font-size: 9px;
    color: #77776a;
}

.fit {
    width: 63px;
    height: 21px;
    background: #6a6a62;
    border-radius: 4px;
    display: flex;
    align-items: center;
    justify-content: center;
    font-size: 11px;
    color: #dedede;
}

.orient {
    width: 63px;
    height: 21px;
    display: flex;
    border-radius: 4px;
    overflow: hidden;
    background: #2f2f27;
}

.orient span {
    flex: 1;
    display: flex;
    align-items: center;
    justify-content: center;
}

.orient .picked {
    background: #1277ee;
}

.tall-box {
    width: 7px;
    height: 11px;
    background: #aaaa9a;
}

.wide-box {
    width: 13px;
    height: 7px;
    background: #fff;
}

.check {
    display: flex;
    align-items: center;
    height: 21px;
    margin-top: 3px;
    font-size: 11px;
    color: #c4c4b6;
}

.first-check {
    margin-top: 20px;
}

.check i {
    width: 12px;
    height: 12px;
    border-radius: 2px;
    background: #55554a;
    margin-right: 5px;
}

.swatch {
    margin-left: auto;
    width: 38px;
    height: 21px;
    border-radius: 4px;
    background: #a6a688;
}

.export {
    display: flex;
    align-items: center;
    justify-content: space-between;
    margin-top: 22px;
    font-size: 10px;
    font-weight: bold;
    color: #77776a;
}

.export svg {
    width: 11px;
    height: 11px;
}

.anima {
    margin-top: auto;
}

.anima-head {
    height: 27px;
    background: #4c4c34;
    display: flex;
    align-items: center;
    padding: 0 10px 0 9px;
}

.anima-head b {
    margin-left: 9px;
    color: #a8a898;
    font-size: 11px;
}

.anima-logo {
    width: 13px;
    height: 13px;
    border: 3px solid #fff;
    background: #22118a;
    box-shadow: -2px 2px 0 #2a1fd0;
}

.anima-icons {
    margin-left: auto;
    display: flex;
    gap: 11px;
}

.anima-icons svg {
    width: 13px;
    height: 13px;
}

.anima-tabs {
    height: 26px;
    display: flex;
    background: #2c2c24;
    border-bottom: 1px solid #4c4c34;
}

.tab {
    width: 80px;
    display: flex;
    align-items: center;
    justify-content: center;
}

.tab svg {
    width: 15px;
    height: 15px;
}

.tab svg.wide {
    width: 26px;
    height: 12px;
}

.tab.current {
    background: #4c4c34;
}

.pin {
    height: 50px;
    display: flex;
    align-items: center;
    padding: 0 10px;
    border-bottom: 1px solid #44443a;
}

.pin b {
    width: 17px;
    font-size: 11px;
    color: #d8d8cc;
}

.pin-icons {
    display: flex;
    gap: 10px;
    margin-left: 50px;
}

.pin-icons svg {
    width: 20px;
    height: 24px;
}

.pin-icons svg.pin-wide {
    width: 24px;
}

.trash {
    width: 12px;
    height: 14px;
    margin-left: 13px;
}

.pin-drop {
    margin-left: 21px;
    width: 19px;
    height: 19px;
    background: #66665c;
    border-radius: 3px;
    display: flex;
    align-items: center;
    justify-content: center;
}

.pin-drop svg {
    width: 9px;
    height: 6px;
}

.specs {
    height: 49px;
    display: flex;
    align-items: flex-start;
    padding: 13px 6px 0 17px;
}

.spec {
    width: 18px;
    margin-right: 29px;
    display: flex;
    flex-direction: column;
    align-items: center;
}

.spec svg {
    width: 18px;
    height: 14px;
}

.spec small {
    margin-top: 3px;
    font-size: 10px;
    color: #26261e;
}

.dots {
    margin: 2px 0 0 2px;
    font-size: 8px;
    color: #66665a;
    letter-spacing: 0;
}

.export-btn {
    margin-left: auto;
    width: 97px;
    height: 19px;
    background: #66665c;
    border-radius: 3px;
    display: flex;
    align-items: center;
    justify-content: center;
    font-size: 11px;
    color: #dbdbd0;
}

/* stuff behind the window */
.behind {
    position: absolute;
    left: 0;
    right: 0;
    top: 782px;
    height: 18px;
    display: flex;
    padding-left: 332px;
    background: #14140f;
}

.behind-light {
    width: 743px;
    background: linear-gradient(90deg, #6e6e62, #8e8e7e 60%, #a6a694);
}

.behind-right {
    flex: 1;
    display: flex;
    align-items: center;
    justify-content: flex-end;
    padding: 6px 7px 0 0;
    color: #77776a;
    font-size: 13px;
    gap: 8px;
}

.behind-right svg {
    width: 8px;
    height: 8px;
}

/* loom notice */
.loom {
    position: absolute;
    left: 339px;
    top: 749px;
    width: 601px;
    height: 42px;
    background: linear-gradient(#fff, #fff) 0 0 / 21px 33px no-repeat, #dcdcd4;
    border-radius: 2px;
    display: flex;
    align-items: center;
    color: #2a2a2a;
}

.pause {
    width: 6px;
    height: 12px;
    margin-left: 10px;
    border-left: 2px solid #c4c4bc;
    border-right: 2px solid #c4c4bc;
}

.loom-text {
    margin-left: 10px;
    font-size: 12.600px;
    white-space: nowrap;
}

.stop {
    margin-left: auto;
    width: 106px;
    height: 32px;
    background: #3578d4;
    border-radius: 3px;
    color: #d8e6f8;
    font-size: 13px;
    display: flex;
    align-items: center;
    justify-content: center;
}

.hide {
    width: 47px;
    text-align: center;
    color: #2f6fc8;
    font-size: 13px;
}
```
